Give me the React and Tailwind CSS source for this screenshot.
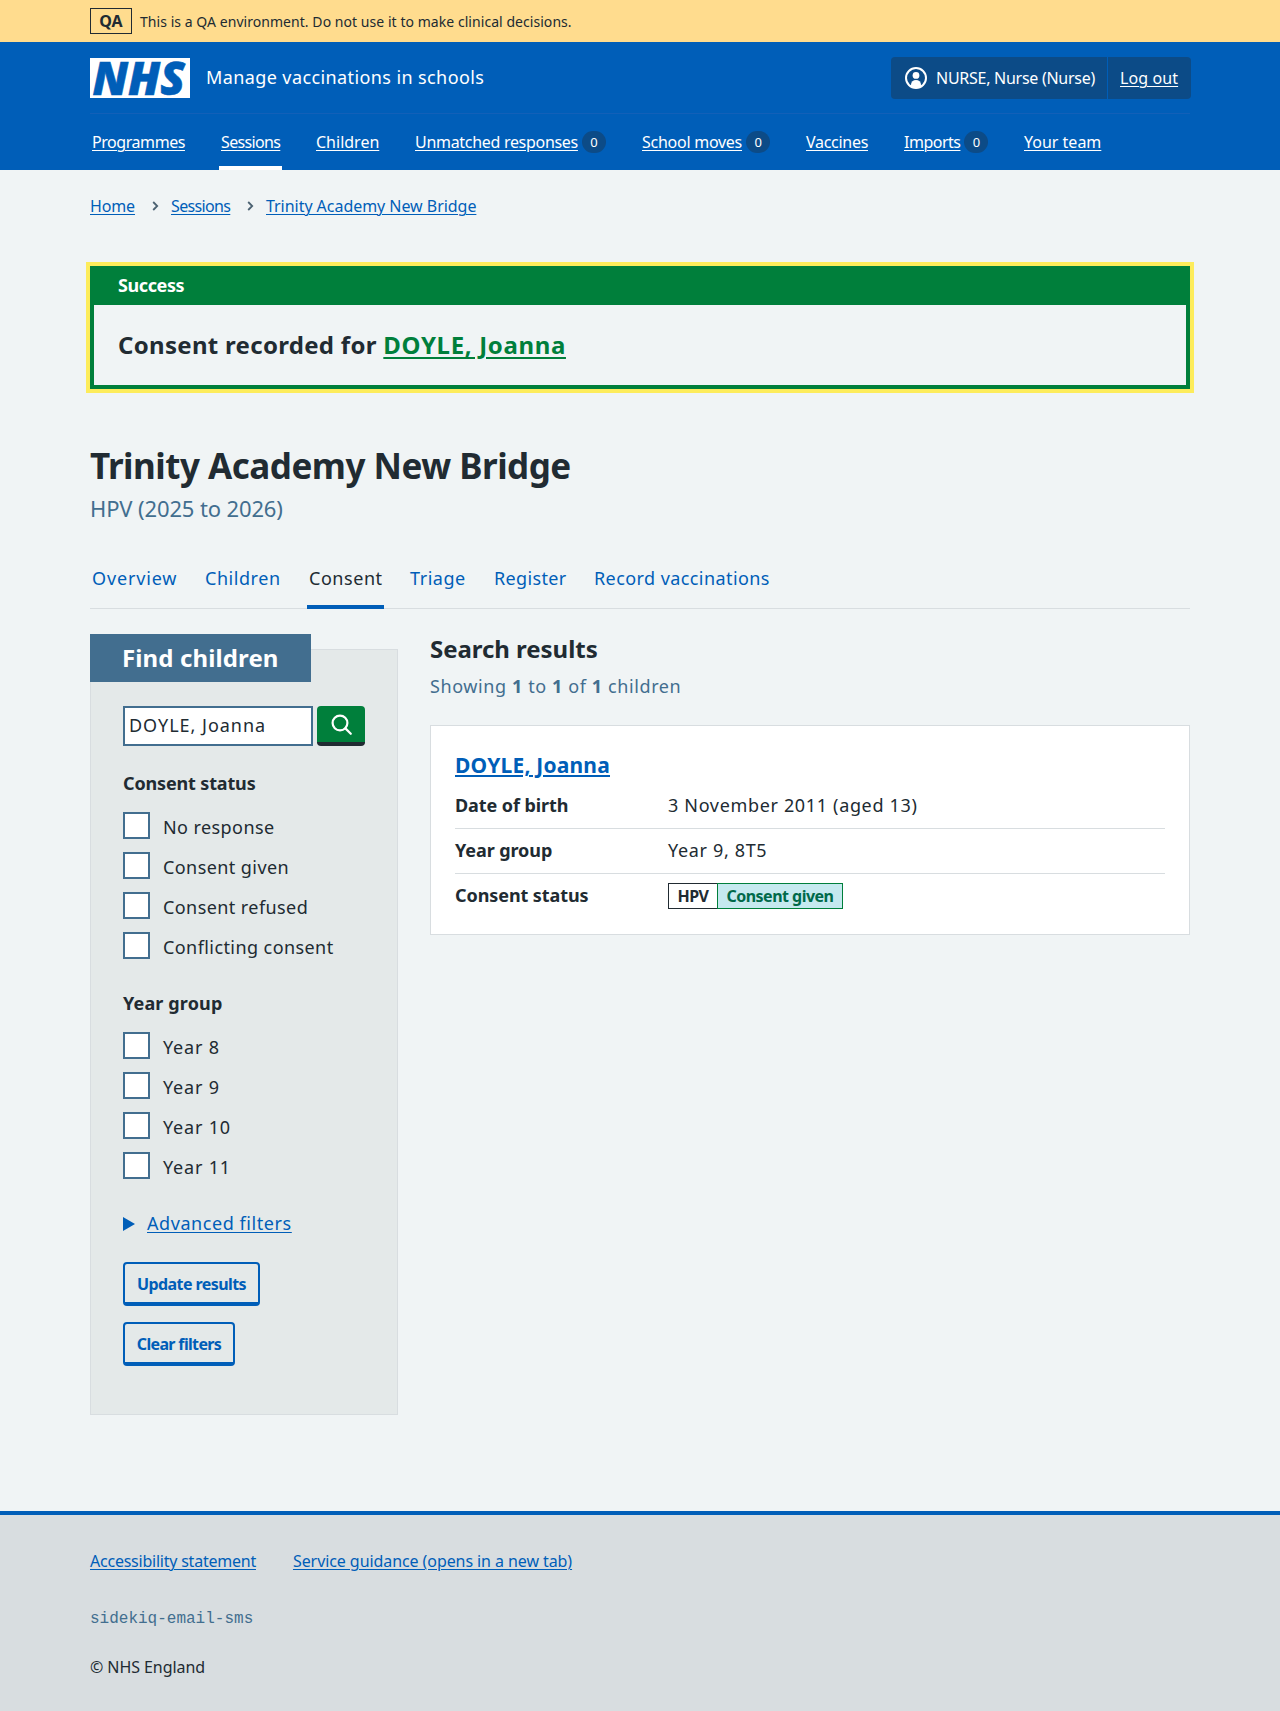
import React from "react";

const UI = "font-['Noto_Sans','Open_Sans',sans-serif]";
const BOLD = "font-['Noto_Sans','Open_Sans',sans-serif] font-bold";
const LINK = "underline decoration-1 underline-offset-[2px]";

function Count() {
  return (
    <span className="ml-1 flex h-[22px] w-6 items-center justify-center rounded-full bg-[#0c4b87] text-[13px] leading-none">
      0
    </span>
  );
}

const NAV = [
  { label: "Programmes", cls: "w-[97px] tracking-[-0.44px]" },
  { label: "Sessions", cls: "w-[63px] tracking-[-0.65px]", current: true },
  { label: "Children", cls: "w-[67px]" },
  { label: "Unmatched responses", cls: "w-[195px] tracking-[-0.3px]", count: true },
  { label: "School moves", cls: "w-[132px] tracking-[-0.26px]", count: true },
  { label: "Vaccines", cls: "w-[66px] tracking-[-0.29px]" },
  { label: "Imports", cls: "w-[88px] tracking-[-0.5px]", count: true },
  { label: "Your team", cls: "w-[81px]" },
];

const TABS = [
  { label: "Overview", cls: "w-[89px] tracking-[0.85px]" },
  { label: "Children", cls: "w-[80px] tracking-[0.55px]" },
  { label: "Consent", cls: "w-[77px] tracking-[0.55px]", current: true },
  { label: "Triage", cls: "w-[60px] tracking-[0.55px]" },
  { label: "Register", cls: "w-[76px] tracking-[0.35px]" },
  { label: "Record vaccinations", cls: "w-[180px] tracking-[0.42px]" },
];

function Logo() {
  return (
    <svg className="overflow-visible" width="100" height="40" viewBox="0 0 100 40" aria-label="NHS">
      <rect width="100" height="40" fill="#fff" />
      <text
        x="2.5"
        y="36.5"
        fill="#005eb8"
        stroke="#005eb8"
        strokeWidth="0.6"
        fontFamily="Open Sans"
        fontWeight="800"
        fontStyle="italic"
        fontSize="46"
        textLength="92.5"
        lengthAdjust="spacingAndGlyphs"
      >
        NHS
      </text>
    </svg>
  );
}

function Chevron() {
  return (
    <svg width="7" height="10" viewBox="0 0 7 10" fill="none" stroke="#4c6272" strokeWidth="1.8">
      <path d="M1.2 1l4 4-4 4" />
    </svg>
  );
}

function Checks({ items }) {
  return items.map((t) => (
    <label key={t} className="flex h-10 items-center">
      <span className="-mt-px h-[27px] w-[27px] border-2 border-[#426e8f] bg-white" />
      <span className={`ml-[13px] mt-[2px] ${t.startsWith("Year") ? "tracking-[0.8px]" : "tracking-[0.42px]"}`}>{t}</span>
    </label>
  ));
}

function Row({ label, children, last }) {
  return (
    <div className={last ? "flex h-[43px]" : "flex h-[45px] border-b border-[#d8dde0]"}>
      <dt className={`${BOLD} w-[213px] leading-[42px] tracking-[-0.08px]`}>{label}</dt>
      <dd className="leading-[42px] tracking-[0.66px]">{children}</dd>
    </div>
  );
}

export default function App() {
  return (
    <div className={`${UI} min-h-[1711px] bg-[#f0f4f5] text-[18px] text-[#212b32]`}>
      <div className="h-[42px] bg-[#ffdc8e]">
        <div className="mx-auto flex h-full w-[1100px] items-center">
          <span className={`${BOLD} flex h-[26px] w-[42px] items-center justify-center border border-[#212b32] text-[16px]`}>
            QA
          </span>
          <span className="ml-2 mt-px text-[14px] tracking-[0.05px]">
            This is a QA environment. Do not use it to make clinical decisions.
          </span>
        </div>
      </div>

      <header className="h-32 bg-[#005eb8] text-white">
        <div className="mx-auto w-[1100px]">
          <div className="flex h-[72px] items-center border-b border-[#1260b8]">
            <Logo />
            <span className="ml-4 tracking-[0.4px]">Manage vaccinations in schools</span>
            <div className="-mr-px ml-auto flex h-[42px] w-[300px] rounded-[4px] bg-[#0c4b87] text-[16px]">
              <div className="flex flex-1 items-center border-r border-[#005eb8] pl-[14px]">
                <svg width="22" height="22" viewBox="0 0 22 22">
                  <circle cx="11" cy="11" r="10" fill="none" stroke="#fff" strokeWidth="2" />
                  <circle cx="11" cy="8.4" r="3.4" fill="#fff" />
                  <path d="M6 19.6v-2.1a5 4.6 0 0 1 10 0v2.1a10 10 0 0 1-10 0z" fill="#fff" />
                </svg>
                <span className="ml-[9px] tracking-[-0.27px]">NURSE, Nurse (Nurse)</span>
              </div>
              <div className="flex w-[83px] items-center pl-3">
                <a className={`${LINK} tracking-[0.1px]`}>Log out</a>
              </div>
            </div>
          </div>
          <nav className="flex h-14 gap-8 text-[16px]">
            {NAV.map((n) => (
              <div
                key={n.label}
                className={`${n.cls} flex items-center whitespace-nowrap border-y-4 border-t-transparent px-[2px] ${n.current ? "border-b-white" : "border-b-transparent"}`}
              >
                <a className={LINK}>{n.label}</a>
                {n.count && <Count />}
              </div>
            ))}
          </nav>
        </div>
      </header>

      <main className="mx-auto w-[1100px] pt-6">
        <div className="flex h-6 items-center text-[16px] text-[#005eb8]">
          <a className={`${LINK} w-[62px] tracking-[-0.13px]`}>Home</a>
          <Chevron />
          <a className={`${LINK} ml-3 w-[76px] tracking-[-0.65px]`}>Sessions</a>
          <Chevron />
          <a className={`${LINK} ml-3 tracking-[-0.04px]`}>Trinity Academy New Bridge</a>
        </div>

        <section className="mt-12 h-[123px] border-4 border-[#007f3b] shadow-[0_0_0_4px_#fdec5b]">
          <h2 className={`${BOLD} h-[35px] bg-[#007f3b] pl-6 leading-[31px] tracking-[-0.4px] text-white`}>Success</h2>
          <p className={`${BOLD} pl-6 text-[24px] leading-[80px] tracking-[0.3px]`}>
            Consent recorded for{" "}
            <a className="tracking-[0.65px] text-[#007f3b] underline decoration-2 underline-offset-[3px]">DOYLE, Joanna</a>
          </p>
        </section>

        <h1 className={`${BOLD} mt-[57px] text-[35px] leading-10 tracking-[-0.5px]`}>Trinity Academy New Bridge</h1>
        <p className="mt-[7px] text-[22px] leading-[30px] tracking-[-0.13px] text-[#426e8f]">HPV (2025 to 2026)</p>

        <div className="mt-[30px] flex h-[56px] gap-6 border-b border-[#d8dde0] text-[#005eb8]">
          {TABS.map((t) => (
            <a
              key={t.label}
              className={`${t.cls} h-[56px] whitespace-nowrap border-b-4 px-[2px] leading-[50px] ${t.current ? "border-[#005eb8] text-[#212b32]" : "border-transparent"}`}
            >
              {t.label}
            </a>
          ))}
        </div>

        <div className="mt-[25px] flex">
          <aside className="mt-[15px] h-[766px] w-[308px] border border-[#d8dde0] bg-[#e4e9e9] pl-8">
            <h2 className={`${BOLD} -ml-[33px] -mt-[16px] h-12 w-[221px] bg-[#426e8f] pl-8 text-[24px] leading-[48px] tracking-[0.12px] text-white`}>
              Find children
            </h2>
            <div className="mt-6 flex gap-1">
              <div className="h-10 w-[190px] border-2 border-[#426e8f] bg-white pl-1 leading-[35px] tracking-[0.98px]">DOYLE, Joanna</div>
              <button className="flex h-10 w-12 justify-center rounded-[4px] border-b-4 border-[#212b32] bg-[#007f3b] pl-px pt-2">
                <svg width="22" height="22" viewBox="0 0 22 22" fill="none" stroke="#fff" strokeWidth="2.2" strokeLinecap="round">
                  <circle cx="9" cy="9" r="7.4" />
                  <path d="M14.4 14.4l5.4 5.4" />
                </svg>
              </button>
            </div>
            <h3 className={`${BOLD} mb-[9px] mt-[23px] leading-7 tracking-[-0.15px]`}>Consent status</h3>
            <Checks items={["No response", "Consent given", "Consent refused", "Conflicting consent"]} />
            <h3 className={`${BOLD} mb-[9px] mt-[23px] leading-7 tracking-[0.14px]`}>Year group</h3>
            <Checks items={["Year 8", "Year 9", "Year 10", "Year 11"]} />
            <div className="mt-[23px] flex items-center text-[#005eb8]">
              <svg className="mt-px" width="12" height="14" viewBox="0 0 12 14">
                <path d="M0 0l12 7-12 7z" fill="#005eb8" />
              </svg>
              <a className={`${LINK} ml-3 leading-7 tracking-[0.57px]`}>Advanced filters</a>
            </div>
            <button className={`${BOLD} mt-[25px] block h-11 w-[137px] rounded-[4px] border-2 border-b-4 border-[#005eb8] pt-px text-[16px] tracking-[-0.58px] text-[#005eb8]`}>
              Update results
            </button>
            <button className={`${BOLD} mt-4 block h-11 w-[112px] rounded-[4px] border-2 border-b-4 border-[#005eb8] pt-px text-[16px] tracking-[-0.66px] text-[#005eb8]`}>
              Clear filters
            </button>
          </aside>

          <section className="ml-8 w-[760px]">
            <h2 className={`${BOLD} text-[24px] leading-[30px] tracking-[-0.04px]`}>Search results</h2>
            <p className="mt-[8px] leading-7 tracking-[0.6px] text-[#426e8f]">
              Showing <b>1</b> to <b>1</b> of <b>1</b> children
            </p>
            <div className="mt-[25px] h-[210px] border border-[#d8dde0] bg-white px-6 pt-[25px]">
              <h3 className={`${BOLD} mb-[5px] text-[21px] leading-7 tracking-[0.2px]`}>
                <a className="text-[#005eb8] underline decoration-2 underline-offset-2">DOYLE, Joanna</a>
              </h3>
              <dl>
                <Row label="Date of birth">3 November 2011 (aged 13)</Row>
                <Row label="Year group">Year 9, 8T5</Row>
                <Row label="Consent status" last>
                  <span className={`${BOLD} mt-[9px] flex h-[26px] text-[16px] leading-6`}>
                    <span className="w-[49px] border border-r-0 border-[#212b32] text-center tracking-[-0.6px]">HPV</span>
                    <span className="w-[126px] border border-[#007f3b] bg-[#c5e9ef] text-center tracking-[-0.52px] text-[#00694a]">Consent given</span>
                  </span>
                </Row>
              </dl>
            </div>
          </section>
        </div>
      </main>

      <footer className="mt-24 h-[200px] border-t-4 border-[#005eb8] bg-[#d8dde0] pt-[34px] text-[16px] leading-6">
        <div className="mx-auto w-[1100px]">
          <div className="flex text-[#005eb8]">
            <a className={`${LINK} mr-[37px] tracking-[-0.23px]`}>Accessibility statement</a>
            <a className={`${LINK} tracking-[-0.08px]`}>Service guidance (opens in a new tab)</a>
          </div>
          <p className="mt-[34px] font-['Liberation_Mono',monospace] text-[#426e8f]">sidekiq-email-sms</p>
          <p className="mt-6 tracking-[-0.07px]">© NHS England</p>
        </div>
      </footer>
    </div>
  );
}
